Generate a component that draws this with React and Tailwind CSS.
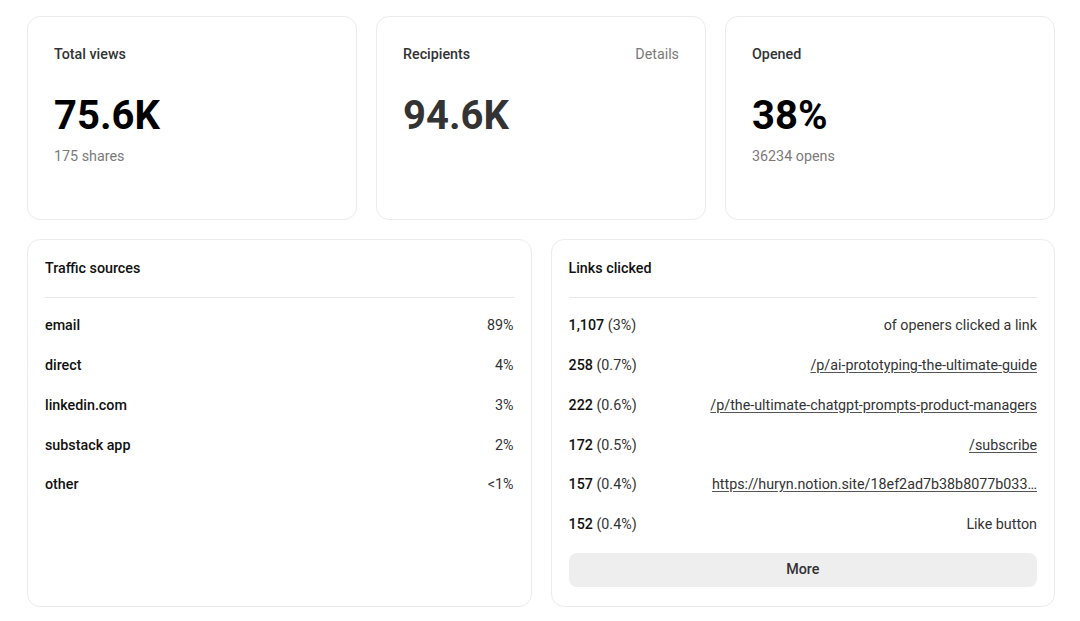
import React from "react";

const stats = [
  { label: "Total views", value: "75.6K", sub: "175 shares", valueColor: "text-black" },
  { label: "Recipients", value: "94.6K", sub: null, action: "Details", valueColor: "text-[#333333]" },
  { label: "Opened", value: "38%", sub: "36234 opens", valueColor: "text-black" },
];

const sources = [
  ["email", "89%"],
  ["direct", "4%"],
  ["linkedin.com", "3%"],
  ["substack app", "2%"],
  ["other", "<1%"],
];

const links = [
  { count: "1,107", pct: "(3%)", text: "of openers clicked a link", link: false },
  { count: "258", pct: "(0.7%)", text: "/p/ai-prototyping-the-ultimate-guide", link: true },
  { count: "222", pct: "(0.6%)", text: "/p/the-ultimate-chatgpt-prompts-product-managers", link: true },
  { count: "172", pct: "(0.5%)", text: "/subscribe", link: true },
  { count: "157", pct: "(0.4%)", text: "https://huryn.notion.site/18ef2ad7b38b8077b033…", link: true },
  { count: "152", pct: "(0.4%)", text: "Like button", link: false },
];

function StatCard({ s }) {
  return (
    <div className="h-[204px] rounded-[13px] border border-[#ececec] bg-white px-[26px] pt-[28px]">
      <div className="flex items-center justify-between h-5">
        <span className="text-[14.3px] font-medium text-[#333333]">{s.label}</span>
        {s.action && <span className="text-[14.3px] text-[#7a7a7a]">{s.action}</span>}
      </div>
      <div className={`mt-[27px] text-[40px] leading-[48px] font-bold ${s.valueColor}`}>{s.value}</div>
      {s.sub && <div className="mt-[6px] text-[14.3px] leading-5 text-[#7a7a7a]">{s.sub}</div>}
    </div>
  );
}

function App() {
  return (
    <div
      className="min-h-screen bg-white pl-[27px] pr-[25px] pt-[16px] text-[#111111]"
      style={{ fontFamily: "Roboto, 'Noto Sans', sans-serif" }}
    >
      <div className="grid grid-cols-3 gap-[19px]">
        {stats.map((s) => (
          <StatCard key={s.label} s={s} />
        ))}
      </div>

      <div className="mt-[19px] grid grid-cols-2 gap-[19px]">
        <div className="h-[368px] rounded-[13px] border border-[#ececec] bg-white px-[17px] pt-[18px]">
          <div className="text-[14.3px] leading-5 font-medium text-[#111111]">Traffic sources</div>
          <div className="mt-[19px] border-t border-[#e8e8e8]" />
          <div className="mt-[8px]">
            {sources.map(([name, pct]) => (
              <div key={name} className="flex h-[39.8px] items-center justify-between text-[14.3px]">
                <span className="font-medium text-[#111111]">{name}</span>
                <span className="text-[#333333]">{pct}</span>
              </div>
            ))}
          </div>
        </div>

        <div className="h-[368px] rounded-[13px] border border-[#ececec] bg-white px-[17px] pt-[18px]">
          <div className="text-[14.3px] leading-5 font-medium text-[#111111]">Links clicked</div>
          <div className="mt-[19px] border-t border-[#e8e8e8]" />
          <div className="mt-[8px]">
            {links.map((l) => (
              <div key={l.count} className="flex h-[39.8px] items-center justify-between gap-[40px] text-[14.3px]">
                <span className="shrink-0 whitespace-nowrap">
                  <span className="font-medium text-[#111111]">{l.count}</span>{" "}
                  <span className="text-[#333333]">{l.pct}</span>
                </span>
                <span
                  className={`whitespace-nowrap text-[#333333] ${l.link ? "underline underline-offset-2 decoration-[#555555]" : ""}`}
                >
                  {l.text}
                </span>
              </div>
            ))}
          </div>
          <button className="mt-[8px] h-[34px] w-full rounded-[8px] bg-[#eeeeee] text-[14.3px] font-medium text-[#333333]">
            More
          </button>
        </div>
      </div>
    </div>
  );
}

export default App;
